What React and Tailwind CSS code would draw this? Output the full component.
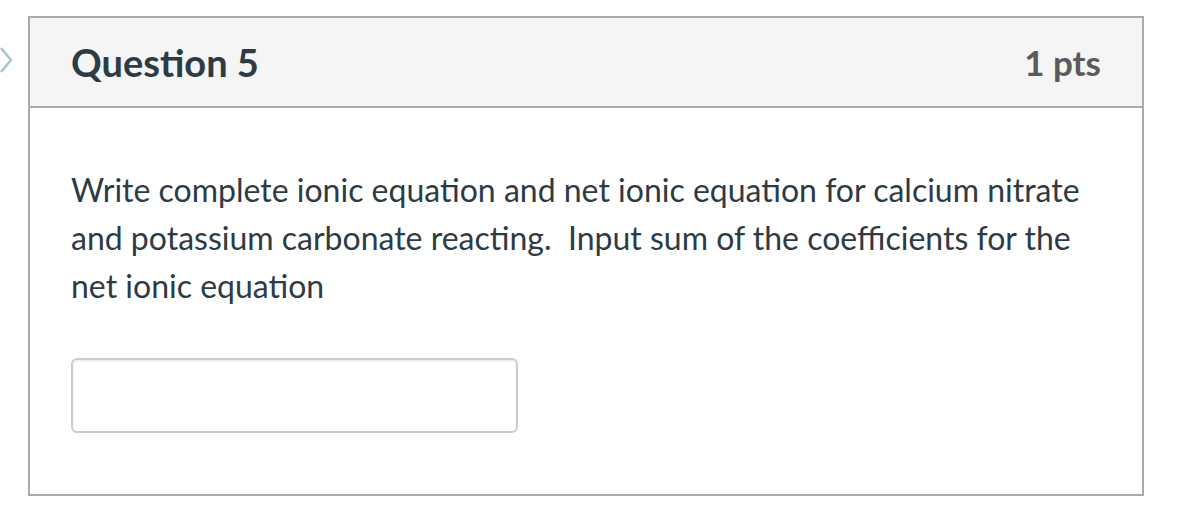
const QuestionCard = () => {
  return (
    <div className="relative border-2 border-[#aaaaaa] bg-white">
      <div className="flex h-[90px] items-center justify-between border-b-2 border-[#aaaaaa] bg-[#f5f5f5] px-[41px]">
        <h2 className="text-[38px] font-bold text-[#2d3b45]">Question 5</h2>
        <div className="text-[35px] font-bold text-[#5b5b5b]">1 pts</div>
      </div>
      <div className="px-[41px] pt-[58px] pb-[61px]">
        <p className="text-[32px] leading-[48px] text-[#2d3b45]">
          Write complete ionic equation and net ionic equation for calcium nitrate and potassium carbonate
          reacting.&nbsp; Input sum of the coefficients for the net ionic equation
        </p>
        <input
          type="text"
          className="mt-[48px] block h-[75px] w-[447px] rounded-[6px] border-2 border-[#cccccc] bg-white shadow-[inset_0_2px_2px_rgba(0,0,0,0.06)] outline-none"
        />
      </div>
    </div>
  );
};

export default function App() {
  return (
    <div className="relative h-[530px] w-[1202px] bg-white font-['Lato',sans-serif]">
      <svg className="absolute left-0 top-[46px]" width="14" height="28" viewBox="0 0 14 28">
        <path d="M1 2 L11 14 L1 26" fill="none" stroke="#a9c2d4" strokeWidth="2.5" />
      </svg>
      <div className="ml-[28px] w-[1116px] pt-[16px]">
        <QuestionCard />
      </div>
    </div>
  );
}
